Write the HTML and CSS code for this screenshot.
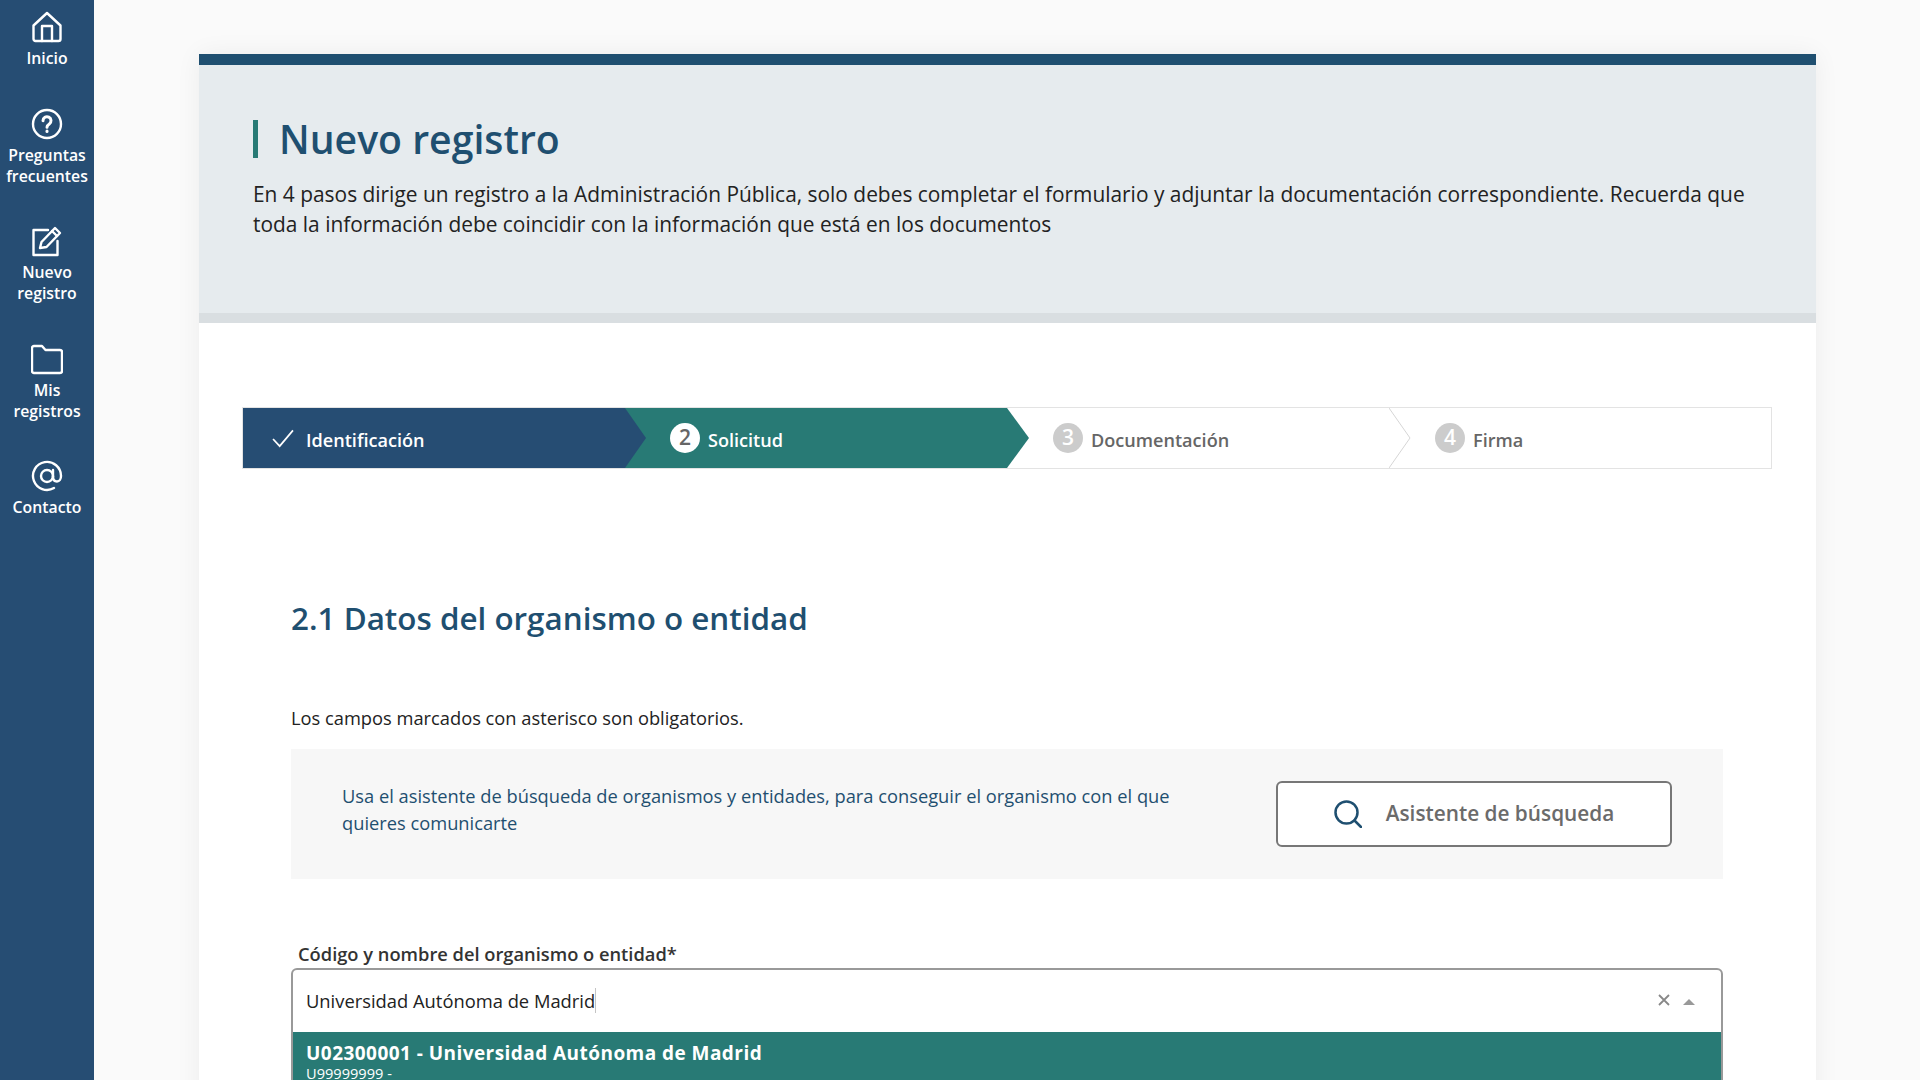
FILE: index.html
```html
<!DOCTYPE html>
<html lang="es">
<head>
    <meta charset="UTF-8">
    <meta name="viewport" content="width=device-width, initial-scale=1.0">
    <title>Nuevo registro</title>
    <link rel="stylesheet" href="styles.css">
</head>
<body>

<!-- Sidebar -->
<nav class="sidebar">
    <a class="nav-item">
        <svg class="nav-icon" viewBox="0 0 32 32"><path d="M2.500 14.500 16 2l13.500 12.500V28a2 2 0 0 1-2 2h-23a2 2 0 0 1-2-2z"/><path d="M11 30V15h10v15"/></svg>
        <span>Inicio</span>
    </a>
    <a class="nav-item">
        <svg class="nav-icon" viewBox="0 0 32 32"><circle cx="16" cy="16" r="14"/><path class="nav-icon-bold" d="M12 12.800a4 4 0 1 1 6.300 3.200c-1.500 1-2.300 1.700-2.300 3.200"/><path class="nav-icon-bold" d="M16 23v.5"/></svg>
        <span>Preguntas frecuentes</span>
    </a>
    <a class="nav-item">
        <svg class="nav-icon" viewBox="0 0 32 32"><path d="M17 5H2.500v25h24V16"/><path d="M9 23l1.500-6L24 3l5 5L15.500 22z"/><path d="M21 6l5 5"/></svg>
        <span>Nuevo registro</span>
    </a>
    <a class="nav-item">
        <svg class="nav-icon" viewBox="0 0 32 32"><path d="M1 5a2 2 0 0 1 2-2h8l3.500 4H29a2 2 0 0 1 2 2v19a2 2 0 0 1-2 2H3a2 2 0 0 1-2-2z"/></svg>
        <span>Mis registros</span>
    </a>
    <a class="nav-item">
        <svg class="nav-icon" viewBox="0 0 32 32"><path d="M23 28a14 14 0 1 1 7-12c0 3-1.500 5.500-4 5.500s-4-2-4-5"/><circle cx="16" cy="16" r="6"/><path d="M22 10v7"/></svg>
        <span>Contacto</span>
    </a>
</nav>

<main class="page">
    <div class="card">
        <!-- Header -->
        <header class="card-header">
            <h1 class="page-title">Nuevo registro</h1>
            <p class="page-intro">En 4 pasos dirige un registro a la Administración Pública, solo debes completar el formulario y adjuntar la documentación correspondiente. Recuerda que toda la información debe coincidir con la información que está en los documentos</p>
        </header>

        <div class="card-body">
            <!-- Stepper -->
            <ol class="stepper">
                <li class="step step-done">
                    <svg class="step-check" viewBox="0 0 24 20"><path d="M1.500 10.500 8.500 18 22.500 1.500"/></svg>
                    <span class="step-label">Identificación</span>
                    <svg class="step-arrow" viewBox="0 0 22 60"><polygon points="0,0 21,30 0,60"/></svg>
                </li>
                <li class="step step-current">
                    <b class="step-num">2</b>
                    <span class="step-label">Solicitud</span>
                    <svg class="step-arrow" viewBox="0 0 22 60"><polygon points="0,0 22,30 0,60"/></svg>
                </li>
                <li class="step">
                    <b class="step-num">3</b>
                    <span class="step-label">Documentación</span>
                    <svg class="step-arrow" viewBox="0 0 22 60"><polyline points="0,0 21,30 0,60"/></svg>
                </li>
                <li class="step">
                    <b class="step-num">4</b>
                    <span class="step-label">Firma</span>
                </li>
            </ol>

            <!-- Form section -->
            <section class="form-section">
                <h2 class="section-title">2.1 Datos del organismo o entidad</h2>
                <p class="required-note">Los campos marcados con asterisco son obligatorios.</p>

                <div class="search-box">
                    <p class="search-text">Usa el asistente de búsqueda de organismos y entidades, para conseguir el organismo con el que quieres comunicarte</p>
                    <button class="search-button">
                        <svg class="search-icon" viewBox="0 0 28 28"><circle cx="12.500" cy="12.500" r="11"/><path d="M20.500 20.500 27 27"/></svg>
                        <span>Asistente de búsqueda</span>
                    </button>
                </div>

                <label class="field-label">Código y nombre del organismo o entidad*</label>
                <div class="select">
                    <div class="select-value">
                        <span class="select-text"><span class="select-input">Universidad Autónoma de Madrid</span></span>
                        <svg class="select-clear" viewBox="0 0 12 12"><path d="M1 1l10 10M11 1 1 11"/></svg>
                        <i class="select-caret"></i>
                    </div>
                    <div class="select-option">
                        <strong>U02300001 - Universidad Autónoma de Madrid</strong>
                        <small>U99999999 -</small>
                    </div>
                </div>
            </section>
        </div>
    </div>
</main>

</body>
</html>
```

FILE: styles.css
```css
* {
    box-sizing: border-box;
}
html, body {
    height: 100%;
}
body {
    margin: 0;
    display: flex;
    overflow: hidden;
    background-color: #fafafa;
    font-family: "Open Sans", Arial, sans-serif;
    color: #222222;
}

/* Sidebar */
.sidebar {
    flex: 0 0 94px;
    height: 100%;
    display: flex;
    flex-direction: column;
    align-items: center;
    gap: 38.500px;
    padding-top: 11px;
    background-color: #264d73;
    color: #ffffff;
}
.nav-item {
    display: flex;
    flex-direction: column;
    align-items: center;
    width: 94px;
    font-size: 15.800px;
    font-weight: 600;
    line-height: 21px;
    text-align: center;
}
.nav-icon {
    width: 32px;
    height: 32px;
    margin-bottom: 5px;
    fill: none;
    stroke: #ffffff;
    stroke-width: 2.400;
    stroke-linejoin: round;
    stroke-linecap: round;
}
.nav-icon-bold {
    stroke-width: 3;
}

/* Card */
.page {
    flex: 1;
    padding: 54px 104px 0 105px;
    min-width: 0;
}
.card {
    background-color: #ffffff;
    box-shadow: 0 0 24px rgba(0, 0, 0, 0.06);
    height: 1100px;
}
.card-header {
    height: 269px;
    padding: 55px 54px 0 54px;
    background-color: #e6ebee;
    border-top: 11px solid #1f4f70;
    border-bottom: 10px solid #d9dee1;
}
.page-title {
    margin: 0 0 21px;
    padding-left: 21px;
    border-left: 5px solid #287a75;
    font-size: 39.200px;
    font-weight: 600;
    line-height: 38px;
    color: #1f4f70;
}
.page-intro {
    margin: 0;
    font-size: 20.900px;
    line-height: 30px;
    color: #222222;
}
.card-body {
    padding: 84px 44px 0 43px;
}

/* Stepper */
.stepper {
    display: flex;
    height: 62px;
    margin: 0;
    padding: 0;
    list-style: none;
    border: 1px solid #e3e3e3;
}
.step {
    position: relative;
    flex: 0 0 25%;
    display: flex;
    align-items: center;
    padding-left: 46px;
    font-size: 18.100px;
    font-weight: 600;
    color: #666666;
}
.step-label {
    margin-top: 4px;
}
.step-done {
    padding-left: 28px;
    background-color: #264d73;
    color: #ffffff;
}
.step-current {
    padding-left: 45px;
    background-color: #287a75;
    color: #ffffff;
}
.step-check {
    width: 24px;
    height: 19px;
    margin-right: 11px;
    fill: none;
    stroke: #ffffff;
    stroke-width: 1.800;
}
.step-num {
    width: 30px;
    height: 30px;
    margin-right: 8px;
    border-radius: 50%;
    background-color: #cccccc;
    color: #ffffff;
    font-size: 21px;
    font-weight: 600;
    line-height: 28px;
    text-align: center;
}
.step-current .step-num {
    background-color: #ffffff;
    color: #666666;
}
.step-arrow {
    position: absolute;
    top: 0;
    right: -22px;
    width: 22px;
    height: 60px;
    z-index: 1;
}
.step-done .step-arrow polygon {
    fill: #264d73;
}
.step-current .step-arrow polygon {
    fill: #287a75;
}
.step-arrow polyline {
    fill: none;
    stroke: #d6d6d6;
    stroke-width: 1;
}

/* Form */
.form-section {
    padding: 0 49px;
}
.section-title {
    margin: 0;
    padding-top: 127px;
    font-size: 31.400px;
    font-weight: 600;
    line-height: 44px;
    color: #1f4f70;
}
.required-note {
    margin: 0;
    padding-top: 64px;
    font-size: 18.300px;
    line-height: 28px;
    color: #222222;
}
.search-box {
    display: flex;
    align-items: center;
    justify-content: space-between;
    height: 130px;
    margin-top: 17px;
    padding: 0 51px;
    background-color: #f7f7f7;
}
.search-text {
    width: 850px;
    margin: 0 0 10px;
    font-size: 18.300px;
    line-height: 27.500px;
    color: #1f4f70;
}
.search-button {
    display: flex;
    align-items: center;
    justify-content: center;
    gap: 24px;
    width: 396px;
    height: 66px;
    padding: 0;
    background-color: #ffffff;
    border: 2px solid #777777;
    border-radius: 6px;
    font-family: inherit;
    font-size: 20.800px;
    font-weight: 600;
    color: #6b6b6b;
}
.search-button span {
    margin-bottom: 3px;
}
.search-icon {
    width: 28px;
    height: 28px;
    fill: none;
    stroke: #1f4f70;
    stroke-width: 2.500;
    stroke-linecap: round;
}
.field-label {
    display: block;
    margin-top: 61px;
    padding-left: 7px;
    font-size: 18.300px;
    font-weight: 600;
    line-height: 28px;
    color: #333333;
}
.select {
    border: 2px solid #999999;
    border-radius: 6px 6px 0 0;
}
.select-value {
    display: flex;
    align-items: center;
    height: 62px;
    padding: 0 26px 2px 13px;
    font-size: 18.350px;
    color: #222222;
}
.select-text {
    flex: 1;
}
.select-input {
    border-right: 1px solid #c4c4c4;
}
.select-clear {
    width: 12px;
    height: 12px;
    margin-right: 13px;
    fill: none;
    stroke: #888888;
    stroke-width: 1.800;
}
.select-caret {
    width: 0;
    height: 0;
    border-left: 6px solid transparent;
    border-right: 6px solid transparent;
    border-bottom: 6px solid #999999;
    margin-top: 3px;
}
.select-option {
    height: 120px;
    padding: 9px 13px;
    background-color: #287a75;
    color: #ffffff;
}
.select-option strong {
    display: block;
    font-size: 19px;
    font-weight: 700;
    letter-spacing: 0.45px;
    line-height: 24px;
}
.select-option small {
    display: block;
    font-size: 14.600px;
    line-height: 16px;
}
```
